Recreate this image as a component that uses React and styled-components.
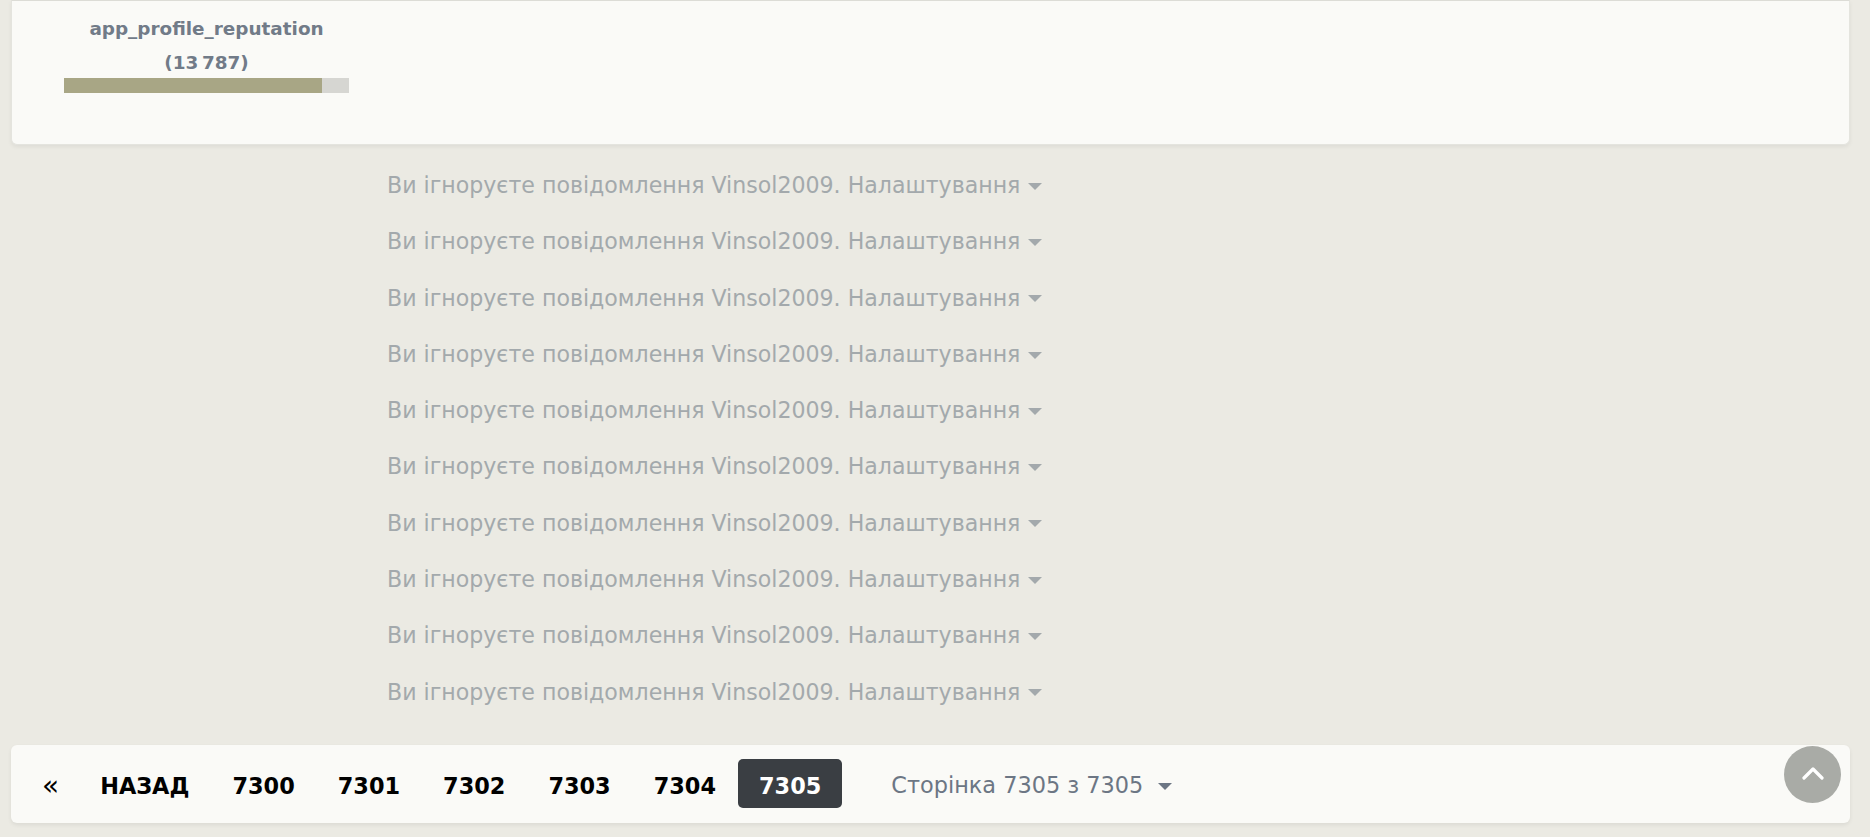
import styled, { createGlobalStyle } from "styled-components";

const GlobalStyle = createGlobalStyle`
  html, body {
    margin: 0;
    padding: 0;
    background: #ebeae3;
    font-family: "DejaVu Sans", Verdana, sans-serif;
  }
`;

const ignoredCount = 10;
const pages = [7300, 7301, 7302, 7303, 7304, 7305];
const currentPage = 7305;
const reputation = { value: "13\u202F787", percent: 90.5 };

export default function App() {
  return (
    <Page>
      <GlobalStyle />
      <ProfileCard>
        <Reputation>
          <RepTitle>app_profile_reputation</RepTitle>
          <RepValue>({reputation.value})</RepValue>
          <RepBar>
            <RepFill style={{ width: reputation.percent + "%" }} />
          </RepBar>
        </Reputation>
      </ProfileCard>

      <IgnoredList>
        {Array.from({ length: ignoredCount }).map((_, i) => (
          <IgnoredRow key={i}>
            Ви ігноруєте повідомлення Vinsol2009. Налаштування
            <Caret $color="#a3a9ac" $gap="8px" />
          </IgnoredRow>
        ))}
      </IgnoredList>

      <Pagination>
        <PageLink $arrow>«</PageLink>
        <PageLink>НАЗАД</PageLink>
        {pages.map((p) => (
          <PageLink key={p} $active={p === currentPage}>
            {p}
          </PageLink>
        ))}
        <PageInfo>
          Сторінка 7305 з 7305
          <Caret $color="#6c7684" $gap="15px" />
        </PageInfo>
      </Pagination>

      <ScrollTop>
        <svg width="22" height="14" viewBox="0 0 22 14">
          <path
            d="M2 12 L11 3 L20 12"
            fill="none"
            stroke="#fff"
            strokeWidth="3.2"
            strokeLinecap="round"
            strokeLinejoin="round"
          />
        </svg>
      </ScrollTop>
    </Page>
  );
}

const Page = styled.div`
  min-height: 837px;
  padding: 0 20px 0 11px;
  box-sizing: border-box;
  display: flex;
  flex-direction: column;
`;

const ProfileCard = styled.div`
  background: #fafaf7;
  border: 1px solid #e4e4de;
  border-top-color: #dcdcd6;
  border-radius: 0 0 6px 6px;
  box-shadow: 0 2px 4px rgba(0, 0, 0, 0.06);
  height: 145px;
  box-sizing: border-box;
  padding: 13px 0 0 52px;
`;

const Reputation = styled.div`
  width: 285px;
  display: flex;
  flex-direction: column;
  align-items: center;
`;

const RepTitle = styled.div`
  font-size: 18.4px;
  font-weight: 700;
  color: #717b88;
  line-height: 30px;
`;

const RepValue = styled.div`
  font-size: 18.4px;
  font-weight: 700;
  color: #717b88;
  line-height: 30px;
  padding-top: 4px;
`;

const RepBar = styled.div`
  width: 100%;
  height: 15px;
  background: #d6d6d2;
`;

const RepFill = styled.div`
  height: 100%;
  background: #a8a685;
`;

const IgnoredList = styled.div`
  padding: 12px 0 0 376px;
  display: flex;
  flex-direction: column;
`;

const IgnoredRow = styled.div`
  font-size: 22.1px;
  line-height: 56.3px;
  color: #a3a9ac;
  white-space: nowrap;
  display: flex;
  align-items: center;
`;

const Caret = styled.span`
  display: inline-block;
  width: 0;
  height: 0;
  margin-left: ${(p) => p.$gap};
  margin-top: 2px;
  border-left: 7px solid transparent;
  border-right: 7px solid transparent;
  border-top: 7px solid ${(p) => p.$color};
`;

const Pagination = styled.div`
  margin-top: 25px;
  height: 78px;
  background: #fafaf7;
  border-radius: 6px;
  box-shadow: 0 2px 4px rgba(0, 0, 0, 0.07);
  display: flex;
  align-items: center;
  gap: 1px;
  padding-left: 12px;
`;

const PageLink = styled.a`
  font-size: ${(p) => (p.$arrow ? "28px" : "22.4px")};
  font-weight: ${(p) => (p.$arrow ? 400 : 700)};
  color: ${(p) => (p.$active ? "#ffffff" : "#000000")};
  background: ${(p) => (p.$active ? "#3a3e43" : "transparent")};
  border-radius: 5px;
  box-sizing: border-box;
  height: 49px;
  padding: 5px ${(p) => (p.$arrow ? "19px" : "21px")} 0;
  line-height: 44px;
  cursor: pointer;
`;

const PageInfo = styled.div`
  margin-left: 48px;
  padding-top: 3px;
  font-size: 22.4px;
  color: #6c7684;
  display: flex;
  align-items: center;
  white-space: nowrap;
`;

const ScrollTop = styled.button`
  position: fixed;
  right: 29px;
  bottom: 34px;
  width: 57px;
  height: 57px;
  border-radius: 50%;
  border: none;
  background: #a9aba6;
  display: flex;
  align-items: center;
  justify-content: center;
  padding: 0 0 3px;
  cursor: pointer;
`;
